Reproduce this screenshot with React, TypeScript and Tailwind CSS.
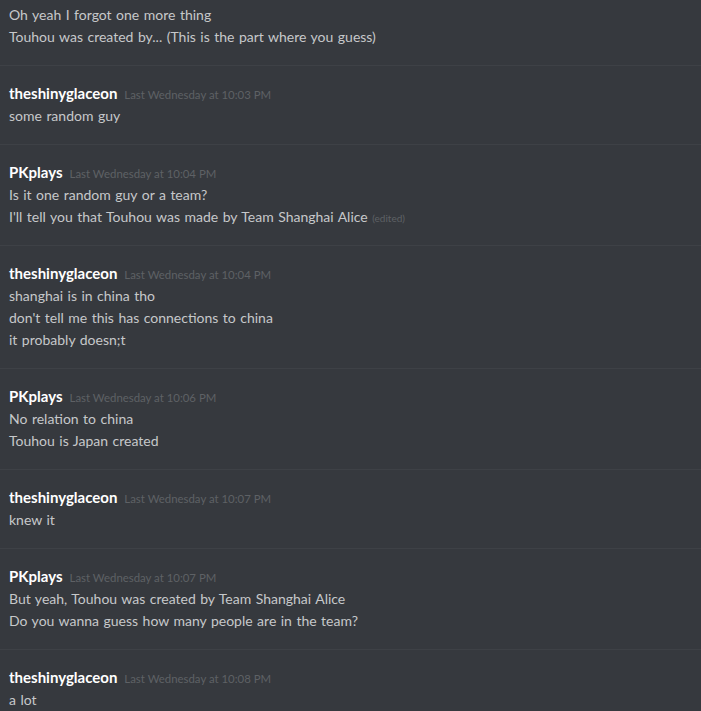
import React from "react";

type Group = { user: string; time: string; lines: React.ReactNode[] };

const groups: Group[] = [
  { user: "theshinyglaceon", time: "Last Wednesday at 10:03 PM", lines: ["some random guy"] },
  {
    user: "PKplays",
    time: "Last Wednesday at 10:04 PM",
    lines: [
      "Is it one random guy or a team?",
      <>
        I'll tell you that Touhou was made by Team Shanghai Alice{" "}
        <span className="text-[10px] leading-none text-[#5e6165] [word-spacing:0px]">(edited)</span>
      </>,
    ],
  },
  {
    user: "theshinyglaceon",
    time: "Last Wednesday at 10:04 PM",
    lines: ["shanghai is in china tho", "don't tell me this has connections to china", "it probably doesn;t"],
  },
  { user: "PKplays", time: "Last Wednesday at 10:06 PM", lines: ["No relation to china", "Touhou is Japan created"] },
  { user: "theshinyglaceon", time: "Last Wednesday at 10:07 PM", lines: ["knew it"] },
  {
    user: "PKplays",
    time: "Last Wednesday at 10:07 PM",
    lines: ["But yeah, Touhou was created by Team Shanghai Alice", "Do you wanna guess how many people are in the team?"],
  },
  { user: "theshinyglaceon", time: "Last Wednesday at 10:08 PM", lines: ["a lot"] },
];

const msg = "text-[14px] leading-[22px] h-[22px] text-[#c6c8ca] whitespace-nowrap [word-spacing:0.9px]";

export default function App() {
  return (
    <div
      className="w-[701px] h-[711px] overflow-hidden bg-[#36393e]"
      style={{ fontFamily: 'Lato, "Noto Sans", sans-serif' }}
    >
      <div className="px-[9px] pt-[4px] pb-[17px]">
        <div className={msg}>Oh yeah I forgot one more thing</div>
        <div className={msg}>Touhou was created by... (This is the part where you guess)</div>
      </div>
      {groups.map((g, i) => (
        <div key={i} className="border-t border-[#3e4146] px-[9px] py-[17px]">
          <div className="flex items-baseline gap-[7px] h-[22px]">
            <span className="text-[15px] font-bold text-white leading-[21px]">{g.user}</span>
            <span className="text-[11.4px] leading-none text-[#5e6165]">{g.time}</span>
          </div>
          {g.lines.map((l, j) => (
            <div key={j} className={msg}>
              {l}
            </div>
          ))}
        </div>
      ))}
    </div>
  );
}
